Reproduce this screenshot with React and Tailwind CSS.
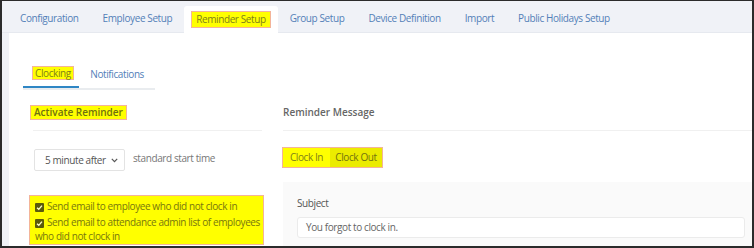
import React from "react";

const F = { fontFamily: '"Open Sans", "Noto Sans", sans-serif' };

function Check() {
  return (
    <span className="inline-flex items-center justify-center w-[9px] h-[9px] bg-[#5a5a0c] rounded-[1px] mr-[3px] align-[-1px]">
      <svg width="7" height="7" viewBox="0 0 8 8">
        <path d="M1.2 4.2 L3.2 6.1 L6.8 1.8" fill="none" stroke="#ffffc8" strokeWidth="1.6" />
      </svg>
    </span>
  );
}

export default function App() {
  const tabs = ["Configuration", "Employee Setup", "Reminder Setup", "Group Setup", "Device Definition", "Import", "Public Holidays Setup"];
  return (
    <div
      style={F}
      className="w-[754px] h-[248px] border-t border-l-2 border-r-2 border-b-2 border-[#2b2b2b] bg-[#f0f2f7] flex flex-col overflow-hidden text-[10px] tracking-[-0.4px]"
    >
      {/* top tabs */}
      <div className="h-[32px] shrink-0 flex items-end pl-[6px] border-b border-[#e6e9ef]">
        {tabs.map((t) =>
          t === "Reminder Setup" ? (
            <div key={t} className="h-[27px] bg-white rounded-t-[3px] px-[7px] flex items-center -mb-px">
              <span className="h-[17px] flex items-center px-[4px] bg-[#ffff00] border border-[#f3b49a] text-[#80801a]">
                {t}
              </span>
            </div>
          ) : (
            <div key={t} className="h-[27px] px-[12px] flex items-center text-[#5380b8]">
              {t}
            </div>
          )
        )}
      </div>

      {/* white panel */}
      <div className="ml-[7px] flex-1 bg-white flex flex-col">
        {/* sub tabs */}
        <div className="mt-[27px] ml-[14px] w-[132px] flex border-b-2 border-[#e9ecef]">
          <div className="h-[28px] w-[57px] pl-[9px] flex items-center border-b-2 border-[#2f86c4] -mb-[2px]">
            <span className="h-[14px] px-[2px] flex items-center bg-[#ffff00] border border-[#f3b49a] text-[#80801a]">
              Clocking
            </span>
          </div>
          <div className="h-[28px] px-[11px] flex items-center text-[#5380b8]">Notifications</div>
        </div>

        {/* columns */}
        <div className="flex flex-1 pl-[24px] gap-[21px]">
          {/* left */}
          <div className="w-[229px] flex flex-col">
            <div className="pt-[15px] pb-[10px] border-b border-[#f0f0f0]">
              <span className="-ml-[3px] h-[15px] w-fit px-[3px] flex items-center bg-[#ffff00] border border-[#f3b49a] text-[#70700f] font-semibold tracking-[0px]">
                Activate Reminder
              </span>
            </div>
            <div className="mt-[18px] flex items-center">
              <div className="ml-[1px] w-[91px] h-[22px] border border-[#e3e3e3] rounded-[2px] flex items-center pl-[10px] pr-[6px] text-[#555]">
                <span className="flex-1">5 minute after</span>
                <svg width="7" height="5" viewBox="0 0 7 5">
                  <path d="M0.8 0.8 L3.5 3.6 L6.2 0.8" fill="none" stroke="#555" strokeWidth="1.2" />
                </svg>
              </div>
              <span className="ml-[8px] pb-[4px] text-[#777]">standard start time</span>
            </div>
            <div className="mt-[24px] -ml-[4px] w-[235px] pl-[5px] pr-[2px] pt-[3px] pb-[1px] bg-[#ffff00] border border-[#f3b49a] text-[#78780f] leading-[14px] flex flex-col gap-[2px]">
              <div>
                <Check />
                Send email to employee who did not clock in
              </div>
              <div>
                <Check />
                Send email to attendance admin list of employees who did not clock in
              </div>
            </div>
          </div>

          {/* right */}
          <div className="flex-1 flex flex-col">
            <div className="pt-[15px] pb-[10px] border-b border-[#f0f0f0]">
              <span className="h-[15px] flex items-center text-[#666] font-semibold tracking-[0px]">Reminder Message</span>
            </div>
            <div className="mt-[16px] -ml-[1px] flex w-fit border border-[#f3b49a] h-[21px]">
              <div className="w-[47px] flex items-center justify-center bg-[#ffff00] text-[#80801a]">Clock In</div>
              <div className="w-[52px] flex items-center justify-center bg-[#ebeb00] text-[#72720f]">Clock Out</div>
            </div>
            <div className="mt-[14px] flex-1 bg-[#fafafa] pl-[14px] pr-[7px] pt-[14px]">
              <div className="leading-[14px] text-[#555]">Subject</div>
              <div className="mt-[7px] h-[21px] bg-white border border-[#ebebeb] rounded-[3px] flex items-center pl-[8px] text-[#666]">
                You forgot to clock in.
              </div>
            </div>
          </div>
        </div>
      </div>
    </div>
  );
}
